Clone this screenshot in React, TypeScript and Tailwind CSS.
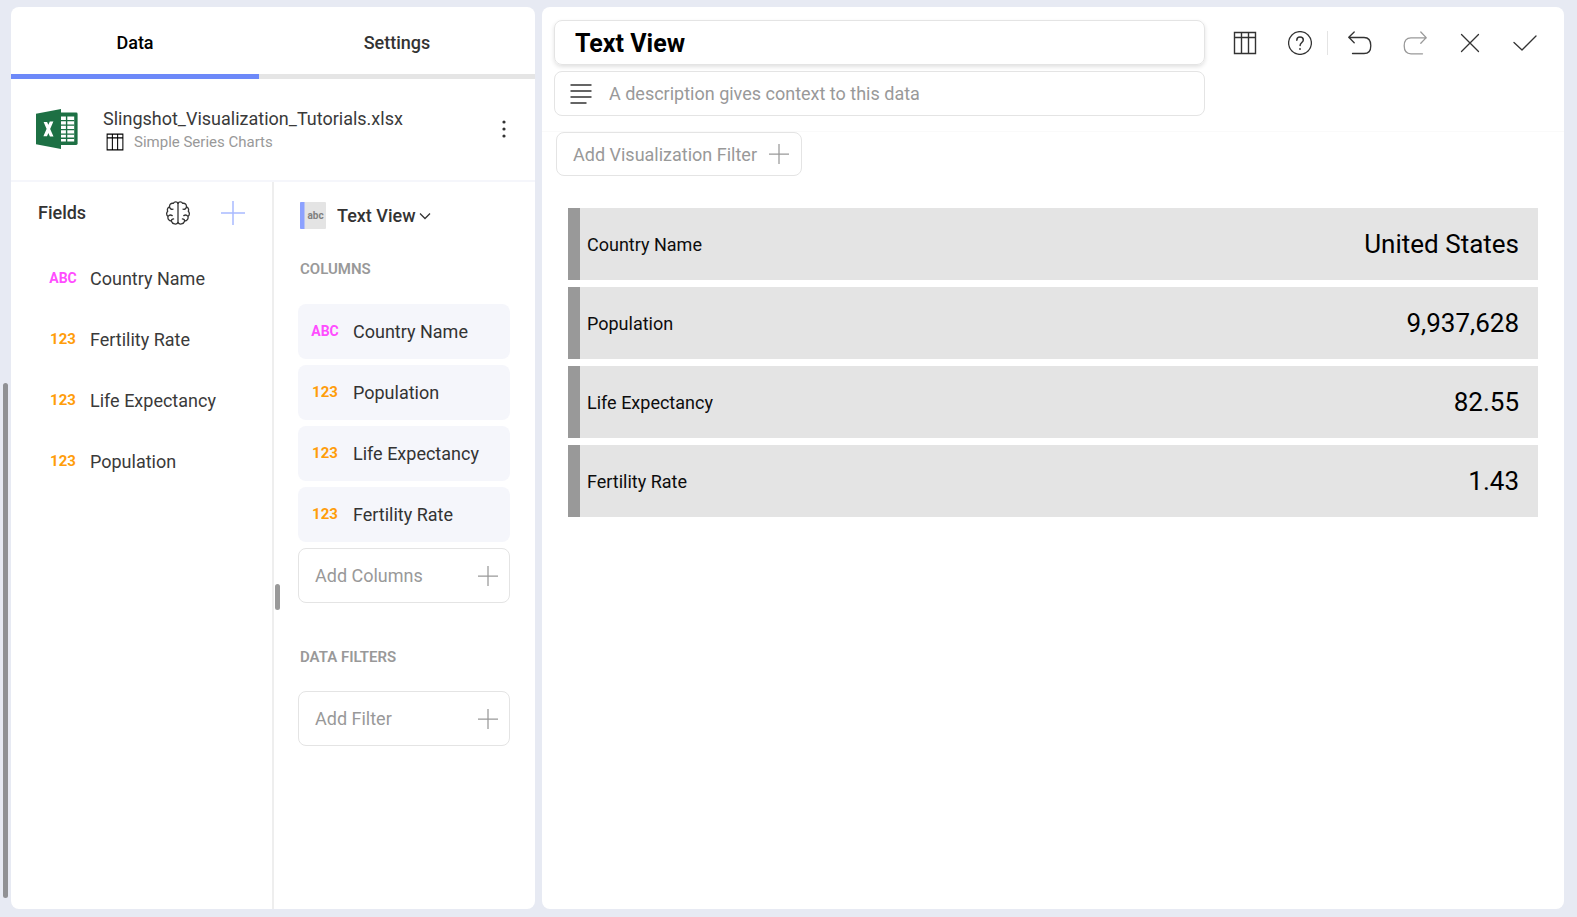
import React from "react";

const fields = [
  { type: "ABC", name: "Country Name" },
  { type: "123", name: "Fertility Rate" },
  { type: "123", name: "Life Expectancy" },
  { type: "123", name: "Population" },
];

const columns = [
  { type: "ABC", name: "Country Name" },
  { type: "123", name: "Population" },
  { type: "123", name: "Life Expectancy" },
  { type: "123", name: "Fertility Rate" },
];

const rows = [
  { label: "Country Name", value: "United States" },
  { label: "Population", value: "9,937,628" },
  { label: "Life Expectancy", value: "82.55" },
  { label: "Fertility Rate", value: "1.43" },
];

function TypeTag({ type }: { type: string }) {
  return (
    <span
      className={
        type === "ABC"
          ? "flex w-[26px] shrink-0 justify-center text-[14px] font-bold text-[#ff4dff]"
          : "flex w-[26px] shrink-0 justify-center text-[15px] font-bold text-[#ff9d0a]"
      }
    >
      {type}
    </span>
  );
}

function Plus({ className }: { className: string }) {
  return (
    <svg viewBox="0 0 24 24" className={className} fill="none" stroke="currentColor" aria-hidden="true">
      <path d="M12 0v24M0 12h24" strokeWidth="1.5" />
    </svg>
  );
}

function Svg({ children, className = "size-6" }: { children: React.ReactNode; className?: string }) {
  return (
    <svg
      viewBox="0 0 24 24"
      className={className}
      fill="none"
      stroke="currentColor"
      strokeWidth="1.3"
      strokeLinecap="round"
      strokeLinejoin="round"
      aria-hidden="true"
    >
      {children}
    </svg>
  );
}

function BrainHalf() {
  return (
    <path d="M12 2.200C11.200.700 8.500.300 7.300 2.300 5 1.900 3.300 3.600 3.600 5.800 1.600 6.500.900 8.500 1.700 10.300.200 11.800.300 14.300 2 15.400 1.500 18 3 20.100 5.400 20.200 6.500 23.300 10.600 24 12 21.600M3.600 5.800C3.900 7.700 5.200 8.600 7 8.200M2 15.400C3.200 13.900 4.900 13.700 6.200 14.600M5.400 20.200C5.300 18.800 6.200 17.900 7.600 17.900" />
  );
}

function ExcelLogo() {
  return (
    <svg viewBox="0 0 42 40" className="h-10 w-[42px] shrink-0" aria-hidden="true">
      <rect x="20" y="3.6" width="21.6" height="32.4" rx="1.4" fill="#1d7044" />
      <path d="M24 7.6h14.2v24.8H24z" fill="#fff" />
      <path
        d="M24 11.6h14.2M24 16.1h14.2M24 20.6h14.2M24 25.1h14.2M24 29.2h14.2M30.6 7v26"
        stroke="#1d7044"
        strokeWidth="1.4"
      />
      <path d="M0 4.8 25 0v40L0 35.2z" fill="#1d7044" />
      <path d="M7.600 13h3.500l6.400 14.400h-3.600zM13.800 12.600h3.600L11 27.200H7.400z" fill="#fff" />
    </svg>
  );
}

function TableIcon({ className = "size-6" }: { className?: string }) {
  return (
    <svg viewBox="0 0 24 24" className={className} fill="none" stroke="currentColor" strokeWidth="1.4" aria-hidden="true">
      <path d="M1.500 1.500h21v21h-21zM1.500 6.500h21M8.500 1.500v21M15.500 1.500v21" />
    </svg>
  );
}

function AddButton({ label }: { label: string }) {
  return (
    <button
      type="button"
      className="flex h-[55px] w-full items-center justify-between rounded-lg border border-[#e4e4e4] pr-[11px] pl-4 text-[18px] text-[#999]"
    >
      {label}
      <Plus className="size-5" />
    </button>
  );
}

function Sidebar() {
  return (
    <aside className="flex w-[524px] shrink-0 flex-col overflow-hidden rounded-lg bg-white">
      <div role="tablist" className="flex h-[72px] shrink-0 text-[18px] font-medium">
        <button type="button" role="tab" aria-selected="true" className="w-[248px] border-b-5 border-[#6d89f9] pt-1 text-black">
          Data
        </button>
        <button type="button" role="tab" aria-selected="false" className="flex-1 border-b-5 border-[#e5e5e5] pt-1 text-[#333]">
          Settings
        </button>
      </div>

      <div className="flex h-[103px] shrink-0 items-center border-b-2 border-[#f5f6fb] pr-6 pb-[2px] pl-[25px]">
        <ExcelLogo />
        <div className="ml-[25px] flex flex-1 flex-col pt-[3px]">
          <span className="text-[18px] leading-6 text-[#3a3a3a]">Slingshot_Visualization_Tutorials.xlsx</span>
          <span className="flex items-center gap-[10px] pl-[3px] text-[15px] leading-[22px] text-[#999]">
            <TableIcon className="size-[18px] text-black" />
            Simple Series Charts
          </span>
        </div>
        <button type="button" aria-label="Data source options" className="flex w-[14px] justify-center">
          <svg viewBox="0 0 4 20" className="h-5 w-1" fill="#333" aria-hidden="true">
            <circle cx="2" cy="3" r="1.600" />
            <circle cx="2" cy="10" r="1.600" />
            <circle cx="2" cy="17" r="1.600" />
          </svg>
        </button>
      </div>

      <div className="flex min-h-0 flex-1">
        <section className="w-[263px] shrink-0 border-r-2 border-[#eee]">
          <div className="flex h-[61px] items-center px-[27px]">
            <h2 className="flex-1 text-[18px] font-medium text-[#333]">Fields</h2>
            <button type="button" aria-label="Smart fields" className="text-[#333]">
              <Svg>
                <path d="M12 2.200v19.400" />
                <BrainHalf />
                <g transform="matrix(-1 0 0 1 24 0)">
                  <BrainHalf />
                </g>
              </Svg>
            </button>
            <button type="button" aria-label="Add field" className="ml-[31px] text-[#a9baff]">
              <Plus className="size-6" />
            </button>
          </div>
          <ul className="flex flex-col gap-[6px] pt-2 pl-[39px]">
            {fields.map((f) => (
              <li key={f.name} className="flex h-[55px] items-center gap-[14px] text-[18px] text-[#3a3a3a]">
                <TypeTag type={f.type} />
                {f.name}
              </li>
            ))}
          </ul>
        </section>

        <section className="relative flex-1 pr-[25px] pl-6">
          <span className="absolute top-[402px] left-px h-[26px] w-[5px] rounded-full bg-[#999]" />
          <div className="flex h-[67px] items-center pl-[2px]">
            <svg viewBox="0 0 26 27" className="h-[27px] w-[26px]" aria-hidden="true">
              <rect width="26" height="27" rx="1" fill="#e4e4e4" />
              <path d="M1 0h3.500v27H1a1 1 0 0 1-1-1V1a1 1 0 0 1 1-1z" fill="#8ca1ff" />
              <text x="15.500" y="17" textAnchor="middle" fontSize="10" fontWeight="700" fill="#808080">
                abc
              </text>
            </svg>
            <select
              aria-label="Visualization type"
              className="ml-[11px] appearance-none bg-transparent text-[18px] font-medium text-[#333]"
            >
              <option>Text View</option>
            </select>
            <svg viewBox="0 0 12 8" className="ml-[3px] h-2 w-3" fill="none" stroke="#333" strokeWidth="1.300" aria-hidden="true">
              <path d="m1 1.500 5 5 5-5" />
            </svg>
          </div>
          <h3 className="flex h-10 items-center pl-[2px] text-[15px] font-semibold text-[#999]">COLUMNS</h3>
          <ul className="mt-[15px] flex flex-col gap-[6px]">
            {columns.map((c) => (
              <li
                key={c.name}
                className="flex h-[55px] items-center gap-[15px] rounded-lg bg-[#f5f6fb] pl-[14px] text-[18px] text-[#333]"
              >
                <TypeTag type={c.type} />
                {c.name}
              </li>
            ))}
            <li>
              <AddButton label="Add Columns" />
            </li>
          </ul>
          <h3 className="mt-[34px] mb-[14px] flex h-10 items-center pl-[2px] text-[15px] font-semibold text-[#999]">
            DATA FILTERS
          </h3>
          <AddButton label="Add Filter" />
        </section>
      </div>
    </aside>
  );
}

function Toolbar() {
  return (
    <div className="flex h-[45px] shrink-0 items-center text-[#333]">
      <button type="button" aria-label="Show data">
        <TableIcon />
      </button>
      <button type="button" aria-label="Help" className="ml-[31px]">
        <Svg>
          <circle cx="12" cy="12" r="11.400" />
          <path d="M8.800 9.200C8.800 7.200 10.200 6 12 6s3.300 1.200 3.300 3c0 2.400-3.200 2.800-3.200 5.600" strokeWidth="1.500" />
          <path d="M12 18v.1" strokeWidth="1.800" />
        </Svg>
      </button>
      <span className="ml-[15px] h-6 w-px bg-[#e4e4e4]" />
      <button type="button" aria-label="Undo" className="ml-5">
        <Svg>
          <path d="M6.200 1 .800 6.200l5.400 5.600M.800 6.500H16c4.500 0 6.800 2.300 6.800 8.200S20.500 22.500 16 22.500H4.500" />
        </Svg>
      </button>
      <button type="button" aria-label="Redo" className="ml-[31px] text-[#999]">
        <Svg>
          <path d="m17.800 1 5.400 5.600-5.400 5.600M23.200 6.900H8C3.500 6.900 1.200 9.200 1.200 14.800S3.500 22.800 8 22.800h11.500" />
        </Svg>
      </button>
      <button type="button" aria-label="Close" className="ml-[31px]">
        <Svg>
          <path d="m3.500 3.500 17 17M20.500 3.500l-17 17" />
        </Svg>
      </button>
      <button type="button" aria-label="Save" className="ml-[31px]">
        <Svg>
          <path d="m1 11.500 8 7.500L23 5" />
        </Svg>
      </button>
    </div>
  );
}

export default function App() {
  return (
    <div className="relative flex min-h-screen gap-[7px] bg-[#e7eaf3] pt-[7px] pr-[13px] pb-2 pl-[11px] font-[Roboto,sans-serif]">
      <span className="absolute top-[383px] bottom-[19px] left-[3px] w-[5px] rounded-full bg-[#909194]" />
      <Sidebar />
      <main className="min-w-0 flex-1 rounded-lg bg-white">
        <header className="flex h-[125px] gap-7 border-b border-[#fafafa] pt-[13px] pr-[27px] pl-3">
          <div className="flex min-w-0 flex-1 flex-col gap-[6px]">
            <input
              aria-label="Title"
              defaultValue="Text View"
              className="h-[45px] w-full rounded-lg border border-[#e4e4e4] px-5 pt-[2px] text-[25px] font-bold text-black shadow-[0_2px_4px_rgba(0,0,0,0.12)] outline-none"
            />
            <div className="flex h-[45px] items-center rounded-lg border border-[#e4e4e4] pr-4 pl-[15px]">
              <svg viewBox="0 0 22 20" className="h-5 w-[22px] shrink-0" stroke="#333" strokeWidth="1.300" aria-hidden="true">
                <path d="M.500 1h21M.500 7h21M.500 13h21M.500 19h16" />
              </svg>
              <input
                aria-label="Description"
                placeholder="A description gives context to this data"
                className="ml-[17px] min-w-0 flex-1 text-[18px] outline-none placeholder:text-[#999]"
              />
            </div>
          </div>
          <Toolbar />
        </header>

        <div className="pr-[26px] pl-[14px]">
          <button
            type="button"
            className="flex h-11 items-center gap-3 rounded-lg border border-[#e4e4e4] pr-3 pl-4 text-[18px] text-[#999]"
          >
            Add Visualization Filter
            <Plus className="size-5" />
          </button>

          <dl className="mt-8 ml-3 flex flex-col gap-[7px]">
            {rows.map((r) => (
              <div
                key={r.label}
                className="flex h-[72px] items-center justify-between border-l-[12px] border-[#999] bg-[#e4e4e4] pr-[19px] pl-[7px]"
              >
                <dt className="text-[18px] text-[#0d0d0d]">{r.label}</dt>
                <dd className="text-[26px] text-black">{r.value}</dd>
              </div>
            ))}
          </dl>
        </div>
      </main>
    </div>
  );
}
